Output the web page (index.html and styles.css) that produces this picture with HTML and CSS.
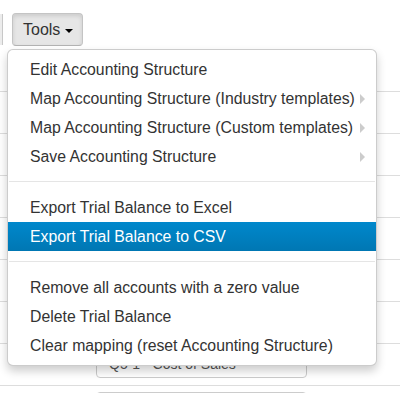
FILE: index.html
```html
<!DOCTYPE html>
<html lang="en">
<head>
    <meta charset="UTF-8">
    <meta name="viewport" content="width=device-width, initial-scale=1.0">
    <title>Trial Balance - Tools</title>
    <link rel="stylesheet" href="styles.css">
</head>
<body>
    <div class="toolbar">
        <div class="btn-edge"></div>
        <div class="btn-group">
            <button class="btn active">Tools <span class="caret"></span></button>
            <ul class="dropdown-menu">
                <li><a href="#">Edit Accounting Structure</a></li>
                <li class="submenu"><a href="#">Map Accounting Structure (Industry templates) <span class="arrow"></span></a></li>
                <li class="submenu"><a href="#">Map Accounting Structure (Custom templates) <span class="arrow"></span></a></li>
                <li class="submenu"><a href="#">Save Accounting Structure <span class="arrow"></span></a></li>
                <li class="divider"></li>
                <li><a href="#">Export Trial Balance to Excel</a></li>
                <li class="active"><a href="#">Export Trial Balance to CSV</a></li>
                <li class="divider"></li>
                <li><a href="#">Remove all accounts with a zero value</a></li>
                <li><a href="#">Delete Trial Balance</a></li>
                <li><a href="#">Clear mapping (reset Accounting Structure)</a></li>
            </ul>
        </div>
    </div>

    <div class="rows">
        <div class="row"></div>
        <div class="row"></div>
        <div class="row"></div>
        <div class="row"></div>
        <div class="row"></div>
        <div class="row"></div>
        <div class="row">
            <div class="select">Q5-1 - Cost of Sales <span class="select-caret"></span></div>
        </div>
        <div class="row">
            <div class="select"></div>
        </div>
    </div>
</body>
</html>
```

FILE: styles.css
```css
body {
    font-family: 'Liberation Sans', Arial, sans-serif;
    color: #333;
    background: #fff;
    margin: 0;
    height: 393px;
    overflow: hidden;
}
.toolbar {
    display: flex;
    align-items: flex-start;
    padding-top: 13px;
    height: 33px;
}
.btn-edge {
    width: 2px;
    height: 31px;
    background: #ececec;
    border-right: 1px solid #c8c8c8;
    margin-top: 1px;
}
.btn-group {
    position: relative;
    margin-left: 9px;
}
.btn {
    font-family: inherit;
    font-size: 16px;
    color: #333;
    height: 33px;
    padding: 4px 9px 4px 10px;
    border: 1px solid #c4c4c4;
    border-bottom-color: #b3b3b3;
    border-radius: 4px;
    background: #e6e6e6;
    box-shadow: inset 0 2px 4px rgba(0, 0, 0, 0.12);
    display: flex;
    align-items: center;
    gap: 5px;
}
.caret {
    width: 0;
    height: 0;
    border-top: 4px solid #000;
    border-left: 4px solid transparent;
    border-right: 4px solid transparent;
    margin-top: 2px;
}
.dropdown-menu {
    position: absolute;
    top: 36px;
    left: -5px;
    width: 370px;
    box-sizing: border-box;
    margin: 0;
    padding: 5px 0;
    list-style: none;
    background: #fff;
    border: 1px solid rgba(0, 0, 0, 0.2);
    border-radius: 6px;
    box-shadow: 0 5px 10px rgba(0, 0, 0, 0.2);
    z-index: 10;
}
.dropdown-menu a {
    display: flex;
    align-items: center;
    justify-content: space-between;
    padding: 3px 20px 3px 22px;
    font-size: 15.8px;
    line-height: 23px;
    color: #333;
    text-decoration: none;
    white-space: nowrap;
}
.dropdown-menu .active a {
    color: #fff;
    background: linear-gradient(to bottom, #0088cc, #0077b3);
}
.arrow {
    width: 0;
    height: 0;
    border-left: 5px solid #ccc;
    border-top: 5px solid transparent;
    border-bottom: 5px solid transparent;
    margin-right: -9px;
}
.divider {
    height: 1px;
    margin: 10px 1px;
    background: #e5e5e5;
    border-bottom: 1px solid #fff;
}
.rows {
    margin-top: 45px;
}
.row {
    height: 41px;
    border-top: 1px solid #ddd;
    padding-left: 96px;
}
.select {
    width: 211px;
    height: 28px;
    box-sizing: border-box;
    margin-top: 6px;
    padding: 3px 12px;
    border: 1px solid #ccc;
    border-radius: 4px;
    font-size: 14px;
    line-height: 20px;
    color: #555;
    background: #fff;
    display: flex;
    justify-content: space-between;
    align-items: center;
}
.select-caret {
    width: 0;
    height: 0;
    border-top: 4px solid #333;
    border-left: 3px solid transparent;
    border-right: 3px solid transparent;
}
```
